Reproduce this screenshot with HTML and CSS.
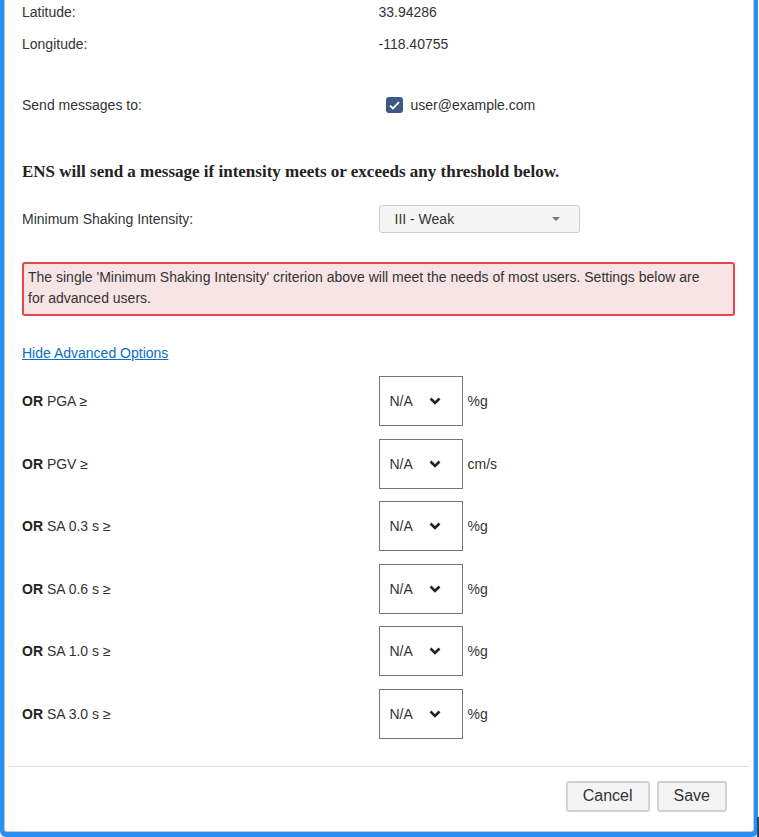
FILE: index.html
```html
<!DOCTYPE html>
<html>
<head>
    <title>Notification Profile</title>
    <link rel="stylesheet" href="styles.css">
</head>
<body>
    <div class="frame">
        <div class="modal">
            <div class="modal-body">
                <div class="row info-row">
                    <div class="label">Latitude:</div>
                    <div class="value">33.94286</div>
                </div>
                <div class="row info-row">
                    <div class="label">Longitude:</div>
                    <div class="value">-118.40755</div>
                </div>
                <div class="row send-row">
                    <div class="label">Send messages to:</div>
                    <div class="value">
                        <label class="check">
                            <span class="check-box">
                                <svg width="11" height="9" viewBox="0 0 11 9"><path d="M1 4.6 L4 7.4 L10 1.2" fill="none" stroke="#fff" stroke-width="1.8"/></svg>
                            </span>
                            user@example.com
                        </label>
                    </div>
                </div>

                <h4 class="notice">ENS will send a message if intensity meets or exceeds any threshold below.</h4>

                <div class="row mmi-row">
                    <div class="label">Minimum Shaking Intensity:</div>
                    <div class="value">
                        <div class="dropdown">
                            <span>III - Weak</span>
                            <span class="caret"></span>
                        </div>
                    </div>
                </div>

                <div class="alert">The single 'Minimum Shaking Intensity' criterion above will meet the needs of most users. Settings below are for advanced users.</div>

                <a class="toggle-link" href="#">Hide Advanced Options</a>

                <div id="advanced" class="advanced"></div>
            </div>
            <div class="modal-footer">
                <button class="btn">Cancel</button>
                <button class="btn">Save</button>
            </div>
        </div>
    </div>

    <script>
        let thresholds = [
            { name: "PGA", unit: "%g" },
            { name: "PGV", unit: "cm/s" },
            { name: "SA 0.3 s", unit: "%g" },
            { name: "SA 0.6 s", unit: "%g" },
            { name: "SA 1.0 s", unit: "%g" },
            { name: "SA 3.0 s", unit: "%g" }
        ];

        let out = "";
        thresholds.forEach(t => {
            out += `<div class="row adv-row">
                <div class="label"><b>OR</b> ${t.name} &ge;</div>
                <div class="value">
                    <div class="na-select">
                        <span>N/A</span>
                        <svg width="12" height="8" viewBox="0 0 12 8"><path d="M1.5 1.5 L6 6 L10.5 1.5" fill="none" stroke="#222" stroke-width="2.6"/></svg>
                    </div>
                    <span class="unit">${t.unit}</span>
                </div>
            </div>`;
        });
        document.getElementById("advanced").innerHTML = out;
    </script>
</body>
</html>
```

FILE: styles.css
```css
html {
    background-color: #ffffff;
}
body {
    margin: 0;
    padding: 0;
    font-family: "Liberation Sans", Arial, sans-serif;
    font-size: 14px;
    line-height: 20px;
    color: #333333;
    position: relative;
    overflow: hidden;
}
body::after {
    content: "";
    position: absolute;
    right: 0;
    bottom: 0;
    width: 2px;
    height: 20px;
    background-color: #2c4566;
}
.frame {
    width: 758px;
    box-sizing: border-box;
    background-color: #2a8ef5;
    padding: 0 4px 5px 4px;
    border-radius: 0 0 6px 6px;
}
.modal {
    background-color: #ffffff;
    border: 1px solid #c4c4c4;
    border-top: none;
    border-radius: 0 0 3px 3px;
}
.modal-body {
    padding: 2px 18px 0 17px;
}
.row {
    display: grid;
    grid-template-columns: 1fr 1fr;
    align-items: center;
}
.info-row {
    margin-bottom: 12px;
}
.send-row {
    margin-top: 41px;
}
.check {
    display: flex;
    align-items: center;
    margin-left: 7px;
}
.check-box {
    width: 17px;
    height: 16px;
    border-radius: 3px;
    background-color: #3b5a82;
    display: flex;
    align-items: center;
    justify-content: center;
    margin-right: 8px;
}
.notice {
    font-family: "Liberation Serif", "Times New Roman", serif;
    font-size: 17px;
    line-height: 22px;
    font-weight: bold;
    color: #222222;
    margin: 46px 0 22px 0;
}
.dropdown {
    width: 201px;
    height: 28px;
    box-sizing: border-box;
    border: 1px solid #cccccc;
    border-radius: 3px;
    background-color: #f5f5f5;
    display: flex;
    align-items: center;
    justify-content: space-between;
    padding: 0 19px 0 15px;
}
.caret {
    width: 0;
    height: 0;
    border-left: 4px solid transparent;
    border-right: 4px solid transparent;
    border-top: 4px solid #777777;
}
.alert {
    margin-top: 29px;
    border: 2px solid #e5474b;
    border-radius: 3px;
    background-color: #f7e4e4;
    line-height: 21px;
    padding: 3px 20px 5px 4px;
}
.toggle-link {
    display: inline-block;
    margin-top: 27px;
    color: #0b6fc4;
    text-decoration: underline;
}
.advanced {
    margin-top: 13px;
    display: flex;
    flex-direction: column;
    gap: 12.5px;
}
.adv-row .label {
    color: #333333;
}
.adv-row .label b {
    color: #222222;
}
.adv-row .value {
    display: flex;
    align-items: center;
}
.na-select {
    width: 84px;
    height: 50px;
    box-sizing: border-box;
    border: 1px solid #777777;
    display: flex;
    align-items: center;
    padding: 0 0 0 10px;
}
.na-select svg {
    margin-left: 16px;
}
.unit {
    margin-left: 5px;
}
.modal-footer {
    margin: 27px 4px 0 3px;
    border-top: 1px solid #dddddd;
    padding: 14px 22px 19px 0;
    display: flex;
    justify-content: flex-end;
    gap: 7px;
}
.btn {
    font-family: "Liberation Sans", Arial, sans-serif;
    font-size: 16px;
    color: #333333;
    height: 31px;
    padding: 0 15px;
    background-color: #f4f4f4;
    border: 2px solid #d2d2d2;
    border-radius: 3px;
}
```
